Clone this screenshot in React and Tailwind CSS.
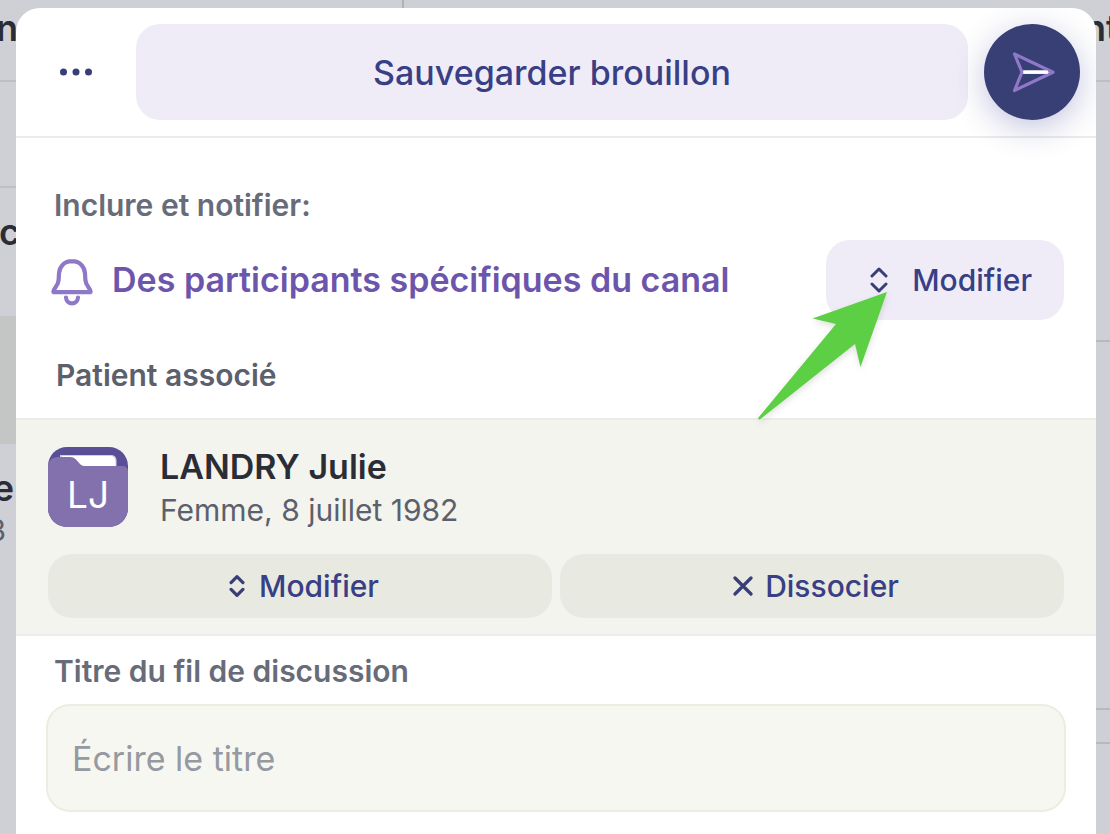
import React from "react";

function Chevrons({ className }) {
  return (
    <svg viewBox="0 0 18 26" className={className} fill="none" stroke="#383f78" strokeWidth="3" strokeLinecap="round" strokeLinejoin="round" aria-hidden="true">
      <path d="M2 9 9 2 16 9M2 17 9 24 16 17" />
    </svg>
  );
}

function Bell() {
  return (
    <svg viewBox="-2 -1 44 48" className="h-12 w-11 shrink-0 overflow-visible" fill="none" stroke="#8f78c8" strokeWidth="4.2" strokeLinecap="round" strokeLinejoin="round" aria-hidden="true">
      <path d="M22 4.200c-7.600 0-12.600 5.200-13 12.200l-.4 6.600c-.2 3-1.300 5-2.900 7.100C4.500 31.800 3.400 33 3.400 34.400c0 .4.300.7.700.7h35.800c.4 0 .7-.3.700-.7 0-1.400-1.100-2.600-2.300-4.300-1.600-2.100-2.700-4.100-2.900-7.100l-.4-6.600C34.600 9.400 29.600 4.200 22 4.200Z" />
      <path d="M16 40.500c.2 3.400 2.800 5.800 6 5.800s5.800-2.400 6-5.800" />
    </svg>
  );
}

function FolderAvatar() {
  return (
    <svg viewBox="0 0 80 80" className="size-20 shrink-0" role="img" aria-label="LJ">
      <defs>
        <clipPath id="avatar-shape">
          <rect width="80" height="80" rx="19" />
        </clipPath>
      </defs>
      <g clipPath="url(#avatar-shape)">
        <rect width="80" height="80" fill="#5a4e96" />
        <path d="M12 8h51c3.400 0 5.500 2.200 5.500 5.500V30H12Z" fill="#d3cde6" />
        <path d="M14 9h48c3.500 0 5.500 2 5.500 5.500v15H14Z" fill="#fff" />
        <path d="M0 20c0-6 4-10 10-10h12c2.500 0 4.300.8 6 2.600l4 4.400c1.500 1.600 3 2 5 2h37c4 0 6 2 6 6v55H0Z" fill="#8371ae" />
      </g>
      <text x="40" y="61" textAnchor="middle" fontSize="37" className="fill-white">LJ</text>
    </svg>
  );
}

function Backdrop() {
  return (
    <div className="absolute inset-0 flex justify-between overflow-hidden bg-[#cfd0d5] text-[#2b2d36]" aria-hidden="true">
      <div className="w-[404px] border-r-2 border-[#b0b1b5] text-4xl font-semibold">
        <div className="flex h-[82px] w-[18px] flex-col items-end border-b-2 border-[#bebfc2] pt-2">
          <span>n</span>
        </div>
        <div className="h-[106px] w-4 border-b-2 border-[#bebfc2]" />
        <div className="flex h-32 w-5 flex-col items-end pt-6">
          <span>rc</span>
        </div>
        <div className="h-32 bg-[#c4c6c5]" />
        <div className="flex w-3.5 flex-col items-end pt-6">
          <span>e</span>
          <span className="mt-1 mr-2 text-3xl font-normal text-[#5b606c]">3</span>
        </div>
      </div>
      <div className="w-[14px] text-4xl font-semibold">
        <div className="flex h-[82px] w-20 flex-col border-b-2 border-[#bebfc2] pt-2">
          <span className="-ml-3">nt</span>
        </div>
        <div className="h-[260px] border-b-2 border-[#b8b9bc]" />
        <div className="h-[368px] border-b-2 border-[#b8b9bc]" />
        <div className="h-[34px] border-b-2 border-[#b8b9bc]" />
      </div>
    </div>
  );
}

function PointerArrow() {
  return (
    <svg viewBox="0 0 136 136" className="pointer-events-none absolute top-12 right-[174px] size-[136px] drop-shadow-md" aria-hidden="true">
      <path d="M133 4 58.500 30.500 82 36 4.500 129.500c-1 1.300.6 2.600 2 1.500L101 56l5.500 23Z" fill="#5dcf45" />
    </svg>
  );
}

export default function App() {
  return (
    <div className="relative min-h-screen overflow-hidden pt-2 pr-[14px] pl-4 font-['Inter',sans-serif]">
      <Backdrop />
      <main className="relative flex min-h-[calc(100vh-8px)] flex-col overflow-hidden rounded-t-3xl bg-white">
        <header className="flex items-center gap-4 border-b-2 border-[#ececec] p-4">
          <button type="button" aria-label="Plus d’options" className="flex h-24 w-[88px] items-center justify-center">
            <svg viewBox="0 0 32 8" className="h-2 w-8" fill="#383f78" aria-hidden="true">
              <circle cx="3.500" cy="4" r="3.500" />
              <circle cx="16" cy="4" r="3.500" />
              <circle cx="28.500" cy="4" r="3.500" />
            </svg>
          </button>
          <button type="button" className="h-24 flex-1 rounded-3xl bg-[#f0ecf7] text-[34px] font-medium text-[#383f85]">
            Sauvegarder brouillon
          </button>
          <button type="button" aria-label="Envoyer" className="flex size-24 items-center justify-center rounded-full bg-[#383f75] shadow-[0_8px_32px_rgba(56,63,150,0.3)]">
            <svg viewBox="0 0 96 96" className="size-24" fill="none" strokeWidth="3.2" strokeLinejoin="round" aria-hidden="true">
              <path d="M38 48.200H66" stroke="#fff" />
              <path d="M30.500 30 69 48.200 30.500 66.500 38 48.200Z" stroke="#8f78c8" />
              <path d="M39.500 48.200H64" stroke="#fff" />
            </svg>
          </button>
        </header>

        <section className="px-8 pt-[47px]">
          <h2 className="pl-1.5 text-[30px] leading-10 font-semibold text-[#676c78]">Inclure et notifier:</h2>
          <div className="relative mt-[15px] flex items-center gap-5">
            <div className="flex flex-1 items-center gap-5">
              <Bell />
              <p className="text-[34px] leading-[48px] font-semibold text-[#6c55ab]">Des participants spécifiques du canal</p>
            </div>
            <button type="button" className="flex h-20 items-center gap-6 rounded-3xl bg-[#f0ecf7] pr-8 pl-11 text-[30px] font-medium text-[#383f85]">
              <Chevrons className="h-[26px] w-[18px]" />
              Modifier
            </button>
            <PointerArrow />
          </div>
          <h2 className="pt-[35px] pb-[23px] pl-2 text-[30px] leading-10 font-semibold text-[#5b606c]">Patient associé</h2>
        </section>

        <section className="border-y-2 border-[#ebebe9] bg-[#f3f4ee] px-8 pt-6 pb-4">
          <div className="flex items-center gap-8">
            <FolderAvatar />
            <div>
              <h3 className="text-[34px] leading-[46px] font-semibold text-[#2b2d36]">LANDRY Julie</h3>
              <p className="text-[30px] leading-10 text-[#5b606c]">Femme, 8 juillet 1982</p>
            </div>
          </div>
          <div className="mt-6 grid grid-cols-2 gap-2 text-[30px] font-medium text-[#383f85]">
            <button type="button" className="flex h-16 items-center justify-center gap-3.5 rounded-3xl bg-[#e8e9e0] pl-2">
              <Chevrons className="h-[22px] w-4 stroke-[3.8]" />
              Modifier
            </button>
            <button type="button" className="flex h-16 items-center justify-center gap-3 rounded-3xl bg-[#e8e9e0] pl-2">
              <svg viewBox="0 0 20 20" className="size-5" fill="none" stroke="#383f78" strokeWidth="3.2" strokeLinecap="round" aria-hidden="true">
                <path d="M2 2 18 18M18 2 2 18" />
              </svg>
              Dissocier
            </button>
          </div>
        </section>

        <section className="px-[30px] pt-[15px]">
          <label htmlFor="thread-title" className="block pb-[13px] pl-2 text-[30px] leading-10 font-semibold text-[#676c78]">
            Titre du fil de discussion
          </label>
          <input
            id="thread-title"
            type="text"
            placeholder="Écrire le titre"
            className="h-[108px] w-full rounded-3xl border-2 border-[#ecede1] bg-[#f6f7f1] px-6 text-[34px] text-[#2b2d36] placeholder:text-[#9599a1]"
          />
        </section>
      </main>
    </div>
  );
}
